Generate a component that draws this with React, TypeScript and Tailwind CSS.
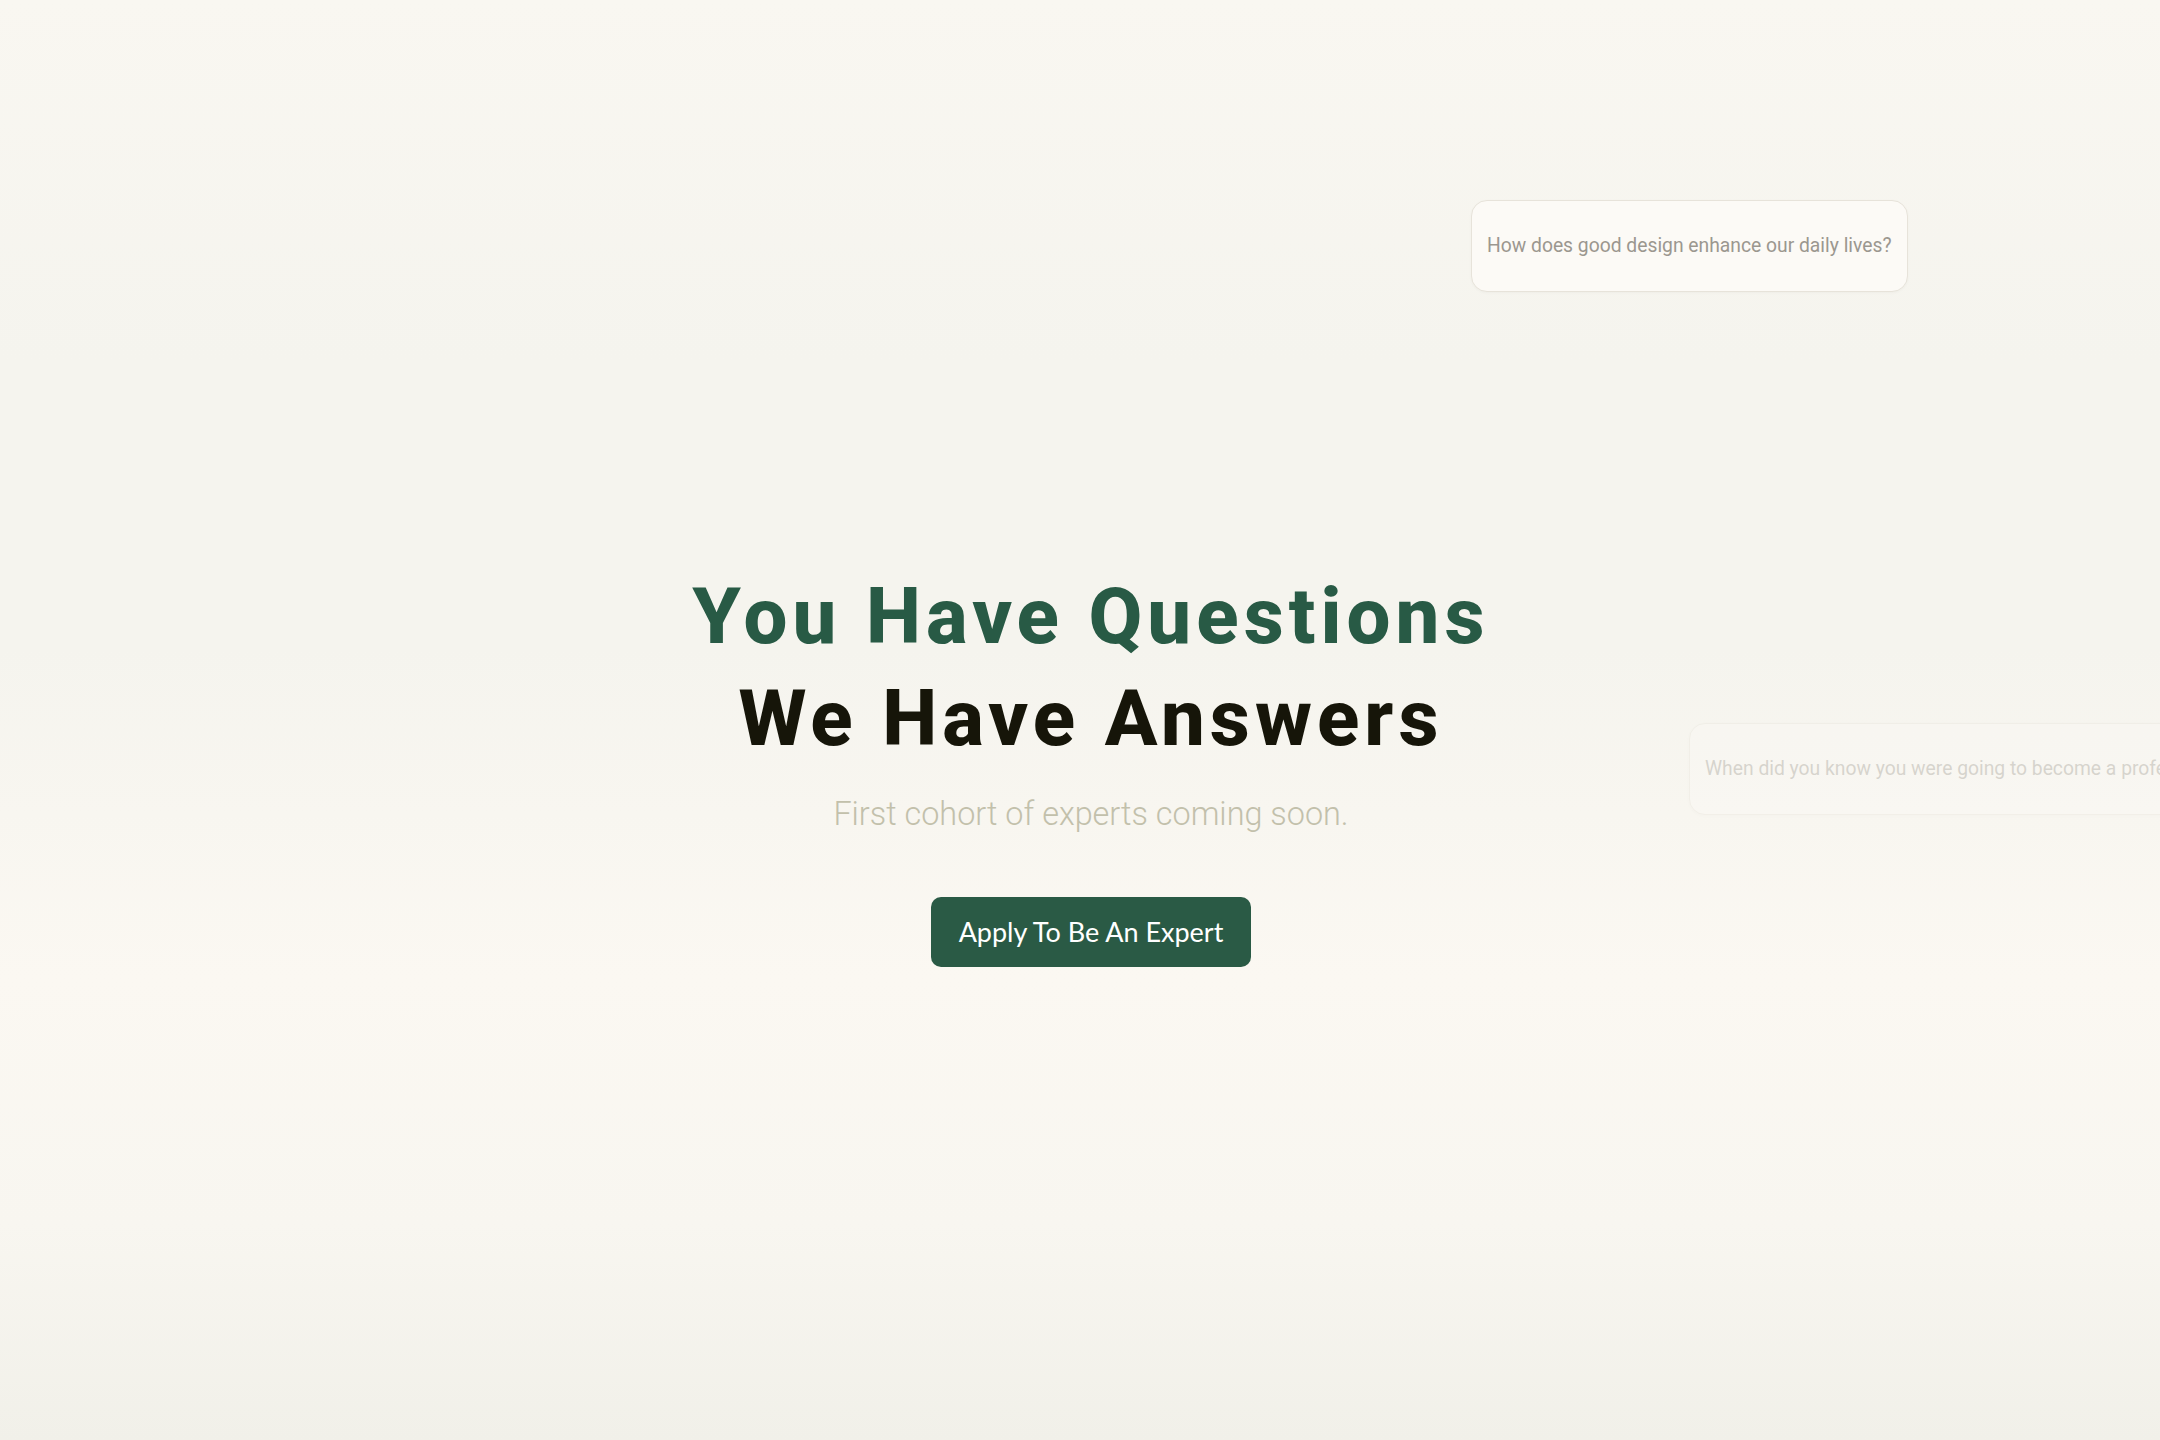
const questions = [
  {
    text: "How does good design enhance our daily lives?",
    className: "left-[1471px] top-[200px] opacity-100",
  },
  {
    text: "When did you know you were going to become a professional?",
    className: "left-[1689px] top-[723px] opacity-35",
  },
];

const QuestionCard = ({ text, className }: { text: string; className: string }) => (
  <div
    className={`absolute flex items-center h-[92px] px-[15px] rounded-[16px] border border-[#e7e3da] bg-[#fcfaf6] shadow-[0_1px_3px_rgba(0,0,0,0.03)] whitespace-nowrap ${className}`}
  >
    <span className="text-[19.3px] text-[#9b978f] font-['Roboto',sans-serif]">{text}</span>
  </div>
);

const App = () => {
  return (
    <main className="relative w-full h-[1440px] overflow-hidden bg-[linear-gradient(180deg,#f9f7f1_0%,#f5f4ee_25%,#f5f4ee_45%,#fbf8f2_68%,#f8f6f0_85%,#f1f0e9_100%)]">
      {questions.map((q, index) => (
        <QuestionCard key={index} text={q.text} className={q.className} />
      ))}

      <section className="flex flex-col items-center pt-[566px] pl-[22px] text-center">
        <h1 className="font-['Roboto',sans-serif] font-extrabold text-[78px] leading-[102px] tracking-[0.065em]">
          <span className="block text-[#285a45]">You Have Questions</span>
          <span className="block text-[#161509]">We Have Answers</span>
        </h1>
        <p className="mt-[24px] font-['Roboto',sans-serif] font-light text-[32.4px] leading-[40px] text-[#c2c0ab]">
          First cohort of experts coming soon.
        </p>
        <button className="mt-[63px] h-[70px] w-[320px] rounded-[10px] bg-[#2a5a45] text-white font-['Lato',sans-serif] text-[27px]">
          Apply To Be An Expert
        </button>
      </section>
    </main>
  );
};

export default App;
